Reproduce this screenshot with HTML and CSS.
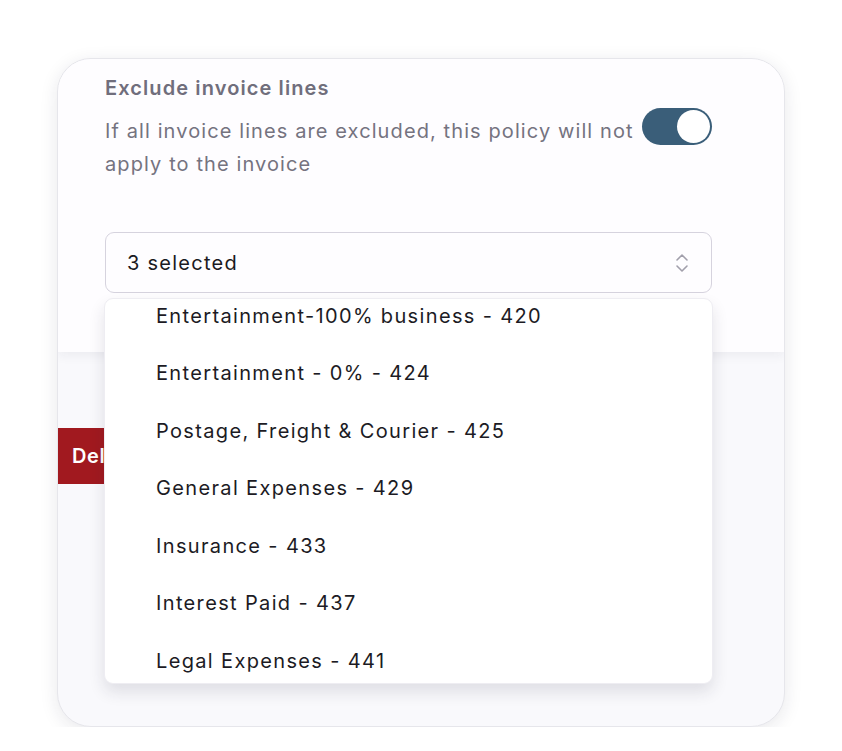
FILE: index.html
```html
<!DOCTYPE html>
<html>
<head>
<meta charset="utf-8">
<link rel="stylesheet" href="styles.css">
</head>
<body>
<div class="card">
  <div class="top">
    <div class="title">Exclude invoice lines</div>
    <div class="row">
      <div class="desc">If all invoice lines are excluded, this policy will not apply to the invoice</div>
      <div class="toggle"><div class="knob"></div></div>
    </div>
    <div class="select">
      <span>3 selected</span>
      <svg class="chev" width="14" height="24" viewBox="0 0 14 24" fill="none" stroke="#a19fab" stroke-width="1.6" stroke-linecap="round" stroke-linejoin="round"><path d="M2 9 L7 4 L12 9"/><path d="M2 15 L7 20 L12 15"/></svg>
    </div>
  </div>
  <div class="bottom">
    <div class="danger">Delete policy</div>
  </div>
  <div class="menu">
    <ul class="list">
      <li>Entertainment-100% business - 420</li>
      <li>Entertainment - 0% - 424</li>
      <li>Postage, Freight &amp; Courier - 425</li>
      <li>General Expenses - 429</li>
      <li>Insurance - 433</li>
      <li>Interest Paid - 437</li>
      <li>Legal Expenses - 441</li>
    </ul>
  </div>
</div>
</body>
</html>
```
FILE: styles.css
```css
* { box-sizing: border-box; }
html, body { margin: 0; padding: 0; background: #ffffff; }
body { font-family: Inter, "Noto Sans", sans-serif; letter-spacing: 1.25px; }
.card {
  position: relative;
  margin: 58px 0 0 57px;
  width: 728px;
  height: 669px;
  border-radius: 34px;
  border: 1px solid #e6e6eb;
  background: #f9f9fc;
  overflow: hidden;
  box-shadow: 0 4px 18px rgba(30, 30, 60, 0.10);
  display: flex;
  flex-direction: column;
}
.top {
  background: #fefdff;
  height: 293px;
  padding: 16px 72px 0 47px;
  box-shadow: 0 4px 10px rgba(40, 40, 70, 0.06);
  position: relative;
  z-index: 1;
}
.title {
  font-size: 20px;
  font-weight: 600;
  color: #706e7c;
  line-height: 26px;
  letter-spacing: 1.1px;
}
.row {
  display: flex;
  align-items: flex-start;
  justify-content: space-between;
  margin-top: 14px;
}
.desc {
  font-size: 20px;
  color: #75737f;
  line-height: 33px;
  width: 536px;
  letter-spacing: 1.1px;
}
.toggle {
  width: 70px;
  height: 37px;
  border-radius: 19px;
  background: #3a5e79;
  padding: 2px;
  display: flex;
  justify-content: flex-end;
  margin-top: -7px;
  flex-shrink: 0;
}
.knob {
  width: 33px;
  height: 33px;
  border-radius: 50%;
  background: #ffffff;
}
.select {
  margin-top: 51px;
  height: 61px;
  border: 1.5px solid #d6d3de;
  border-radius: 9px;
  background: #fefdff;
  display: flex;
  align-items: center;
  justify-content: space-between;
  padding: 0 22px 0 21px;
  font-size: 20px;
  color: #1b1a22;
}
.chev { display: block; }
.bottom {
  flex: 1;
  padding-top: 76px;
}
.danger {
  width: 180px;
  height: 56px;
  background: #a1191f;
  color: #ffffff;
  font-size: 20px;
  font-weight: 600;
  display: flex;
  align-items: center;
  padding-left: 14px;
  letter-spacing: 0.6px;
}
.menu {
  position: absolute;
  left: 46px;
  top: 239px;
  width: 609px;
  height: 386px;
  background: #ffffff;
  border: 1px solid #eeedf2;
  border-radius: 9px;
  box-shadow: 0 8px 16px rgba(30, 30, 60, 0.12);
  overflow: hidden;
  z-index: 2;
}
.list {
  list-style: none;
  margin: -12px 0 0 0;
  padding: 0;
}
.list li {
  height: 57.5px;
  display: flex;
  align-items: center;
  padding-left: 51px;
  font-size: 20px;
  color: #1c1b24;
  letter-spacing: 1.35px;
}
```
